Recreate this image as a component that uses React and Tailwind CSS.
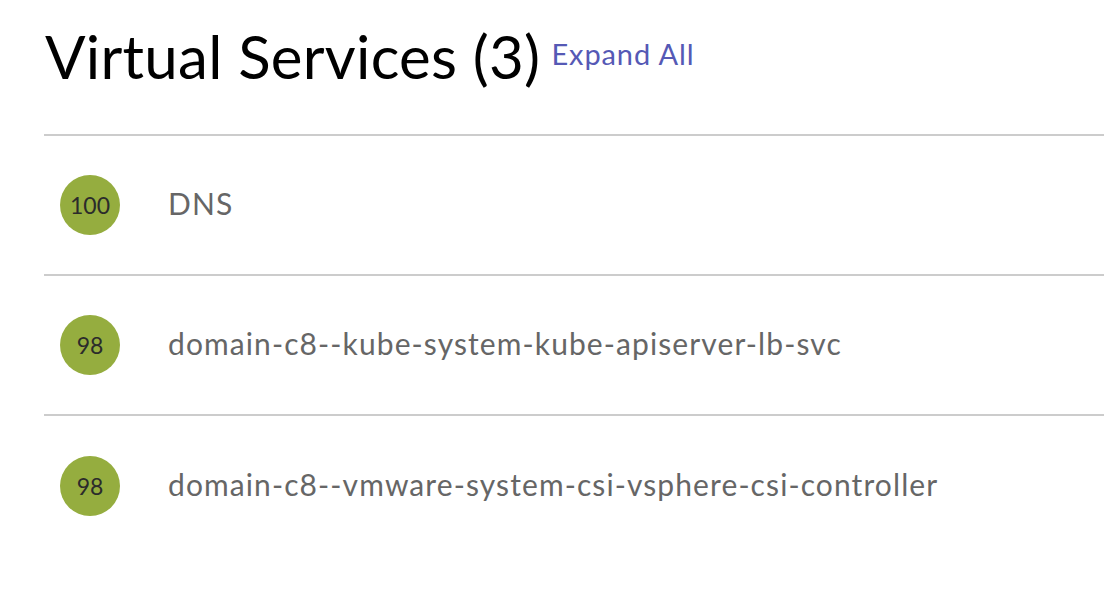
import React from 'react';

const services = [
  { score: 100, name: 'DNS' },
  { score: 98, name: 'domain-c8--kube-system-kube-apiserver-lb-svc' },
  { score: 98, name: 'domain-c8--vmware-system-csi-vsphere-csi-controller' },
];

const App = () => {
  return (
    <div className="w-[1104px] h-[590px] bg-white overflow-hidden pl-[44px] pt-[20px]" style={{ fontFamily: 'Lato, "Noto Sans", sans-serif' }}>
      <div className="flex items-center h-[72px] pl-[1px]">
        <h1 className="text-[60px] leading-none font-normal text-black tracking-[0.25px]">Virtual Services (3)</h1>
        <button className="ml-[11px] mt-[-6px] text-[29px] text-[#5559b5] leading-none tracking-[0.9px]">Expand All</button>
      </div>
      <div className="mt-[42px] border-t-2 border-[#cccccc]">
        {services.map((s, i) => (
          <div key={i} className="flex items-center h-[140px] border-b-2 border-[#cccccc] last:border-b-0">
            <div className="ml-[16px] w-[60px] h-[60px] rounded-full bg-[#95ad3f] flex items-center justify-center text-[23px] text-[#2b2b2b]">
              {s.score}
            </div>
            <span className="ml-[48px] mt-[-3px] text-[30px] text-[#666666] tracking-[1.1px]">{s.name}</span>
          </div>
        ))}
      </div>
    </div>
  );
};

export default App;
